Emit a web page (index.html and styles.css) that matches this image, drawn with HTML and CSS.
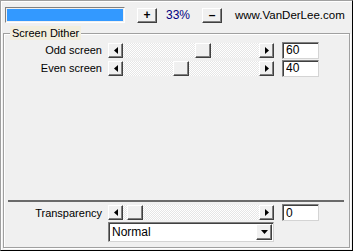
FILE: index.html
```html
<!DOCTYPE html>
<html lang="en">
<head>
    <meta charset="UTF-8">
    <title>Screen Dither</title>
    <link rel="stylesheet" href="styles.css">
</head>
<body>

<div class="panel">
    <div class="toolbar">
        <div class="progress"><div class="progress-fill" style="width: 100%"></div></div>
        <button class="btn">+</button>
        <span class="percent">33%</span>
        <button class="btn">&ndash;</button>
        <span class="url">www.VanDerLee.com</span>
    </div>

    <fieldset class="group">
        <legend>Screen Dither</legend>

        <div class="row row-first">
            <label class="row-label">Odd screen</label>
            <div class="scroll">
                <span class="scroll-btn"><svg width="4" height="7" viewBox="0 0 4 7"><polygon points="4,0 4,7 0,3.5" fill="#000"/></svg></span>
                <span class="scroll-track"><span class="scroll-thumb" style="margin-left: 72px"></span></span>
                <span class="scroll-btn"><svg width="4" height="7" viewBox="0 0 4 7"><polygon points="0,0 0,7 4,3.5" fill="#000"/></svg></span>
            </div>
            <input class="edit" type="text" value="60">
        </div>

        <div class="row">
            <label class="row-label">Even screen</label>
            <div class="scroll">
                <span class="scroll-btn"><svg width="4" height="7" viewBox="0 0 4 7"><polygon points="4,0 4,7 0,3.5" fill="#000"/></svg></span>
                <span class="scroll-track"><span class="scroll-thumb" style="margin-left: 50px"></span></span>
                <span class="scroll-btn"><svg width="4" height="7" viewBox="0 0 4 7"><polygon points="0,0 0,7 4,3.5" fill="#000"/></svg></span>
            </div>
            <input class="edit" type="text" value="40">
        </div>

        <div class="spacer"></div>
        <div class="separator"></div>

        <div class="row row-bottom">
            <label class="row-label">Transparency</label>
            <div class="scroll">
                <span class="scroll-btn"><svg width="4" height="7" viewBox="0 0 4 7"><polygon points="4,0 4,7 0,3.5" fill="#000"/></svg></span>
                <span class="scroll-track"><span class="scroll-thumb" style="margin-left: 4px"></span></span>
                <span class="scroll-btn"><svg width="4" height="7" viewBox="0 0 4 7"><polygon points="0,0 0,7 4,3.5" fill="#000"/></svg></span>
            </div>
            <input class="edit" type="text" value="0">
        </div>

        <div class="row row-combo">
            <span class="row-label"></span>
            <div class="combo">
                <span class="combo-text">Normal</span>
                <span class="combo-btn"><svg width="7" height="4" viewBox="0 0 7 4"><polygon points="0,0 7,0 3.5,4" fill="#000"/></svg></span>
            </div>
        </div>
    </fieldset>
</div>

</body>
</html>
```

FILE: styles.css
```css
body {
    margin: 0;
    font-family: "Liberation Sans", Arial, sans-serif;
    font-size: 11px;
    background-color: #f0f0f0;
}

.panel {
    box-sizing: border-box;
    width: 353px;
    height: 251px;
    display: flex;
    flex-direction: column;
    background-color: #f0f0f0;
    border: 1px solid;
    border-color: #a0a0a0 #000 #000 #a0a0a0;
    box-shadow: inset 1px 1px 0 #fff;
}

/* top strip */
.toolbar {
    height: 25px;
    display: flex;
    align-items: center;
    padding-left: 4px;
    padding-top: 3px;
    box-sizing: border-box;
}

.progress {
    box-sizing: border-box;
    width: 120px;
    height: 16px;
    padding: 1px;
    border: 1px solid;
    border-color: #808080 #fff #fff #808080;
    background-color: #f0f0f0;
}

.progress-fill {
    height: 100%;
    background-color: #3399ff;
}

.btn {
    box-sizing: border-box;
    width: 20px;
    height: 15px;
    padding: 0;
    margin-left: 12px;
    font-family: "Liberation Sans", Arial, sans-serif;
    font-size: 12px;
    font-weight: bold;
    line-height: 11px;
    color: #000;
    background-color: #f0f0f0;
    border: 1px solid;
    border-color: #fff #404040 #404040 #fff;
    box-shadow: inset -1px -1px 0 #808080;
}

.percent {
    margin-left: 9px;
    width: 24px;
    font-size: 12px;
    color: #000080;
}

.url {
    margin-left: 13px;
    font-size: 11.5px;
    color: #000;
}

/* group box */
.group {
    flex: 1;
    display: flex;
    flex-direction: column;
    margin: 0 2px 2px 2px;
    padding: 0 0 5px 0;
    min-width: 0;
    border: 1px solid #a0a0a0;
    box-shadow: inset 1px 1px 0 #fff, 1px 1px 0 #fff;
}

.group legend {
    margin-left: 6px;
    padding: 0 2px;
    height: 14px;
    line-height: 14px;
    font-size: 11px;
    background-color: #f2eedd;
}

.row {
    display: flex;
    align-items: center;
    height: 18px;
}

.row-first {
    margin-top: 1px;
}

.row-label {
    width: 98px;
    text-align: right;
    margin-right: 6px;
}

.scroll {
    display: flex;
    width: 166px;
    height: 15px;
}

.scroll-btn {
    box-sizing: border-box;
    width: 15px;
    height: 15px;
    display: flex;
    align-items: center;
    justify-content: center;
    background-color: #f0f0f0;
    border: 1px solid;
    border-color: #fff #404040 #404040 #fff;
    box-shadow: inset -1px -1px 0 #808080;
}

.scroll-track {
    flex: 1;
    display: flex;
    background-color: #fff;
    background-image: repeating-conic-gradient(#e6e6e6 0 25%, #fff 0 50%);
    background-size: 2px 2px;
}

.scroll-thumb {
    box-sizing: border-box;
    width: 16px;
    height: 15px;
    background-color: #f0f0f0;
    border: 1px solid;
    border-color: #fff #404040 #404040 #fff;
    box-shadow: inset -1px -1px 0 #808080;
}

.edit {
    box-sizing: border-box;
    width: 37px;
    height: 17px;
    margin-left: 8px;
    padding: 0 3px;
    font-family: "Liberation Sans", Arial, sans-serif;
    font-size: 12px;
    color: #000;
    background-color: #fff;
    border: 1px solid;
    border-color: #808080 #d4d4d4 #d4d4d4 #808080;
    box-shadow: inset 1px 1px 0 #404040;
    outline: none;
}

.spacer {
    flex: 1;
}

.separator {
    height: 2px;
    margin: 0 5px 0 4px;
    background-color: #6a6a6a;
}

.row-bottom {
    margin-top: 1px;
    height: 19px;
}

.row-combo {
    height: 20px;
}

.combo {
    box-sizing: border-box;
    width: 166px;
    height: 20px;
    display: flex;
    align-items: center;
    padding: 1px;
    background-color: #fff;
    border: 1px solid;
    border-color: #808080 #d4d4d4 #d4d4d4 #808080;
    box-shadow: inset 1px 1px 0 #404040;
}

.combo-text {
    flex: 1;
    padding-left: 2px;
    font-size: 12px;
}

.combo-btn {
    box-sizing: border-box;
    width: 16px;
    height: 16px;
    display: flex;
    align-items: center;
    justify-content: center;
    background-color: #f0f0f0;
    border: 1px solid;
    border-color: #fff #404040 #404040 #fff;
    box-shadow: inset -1px -1px 0 #808080;
}
```
